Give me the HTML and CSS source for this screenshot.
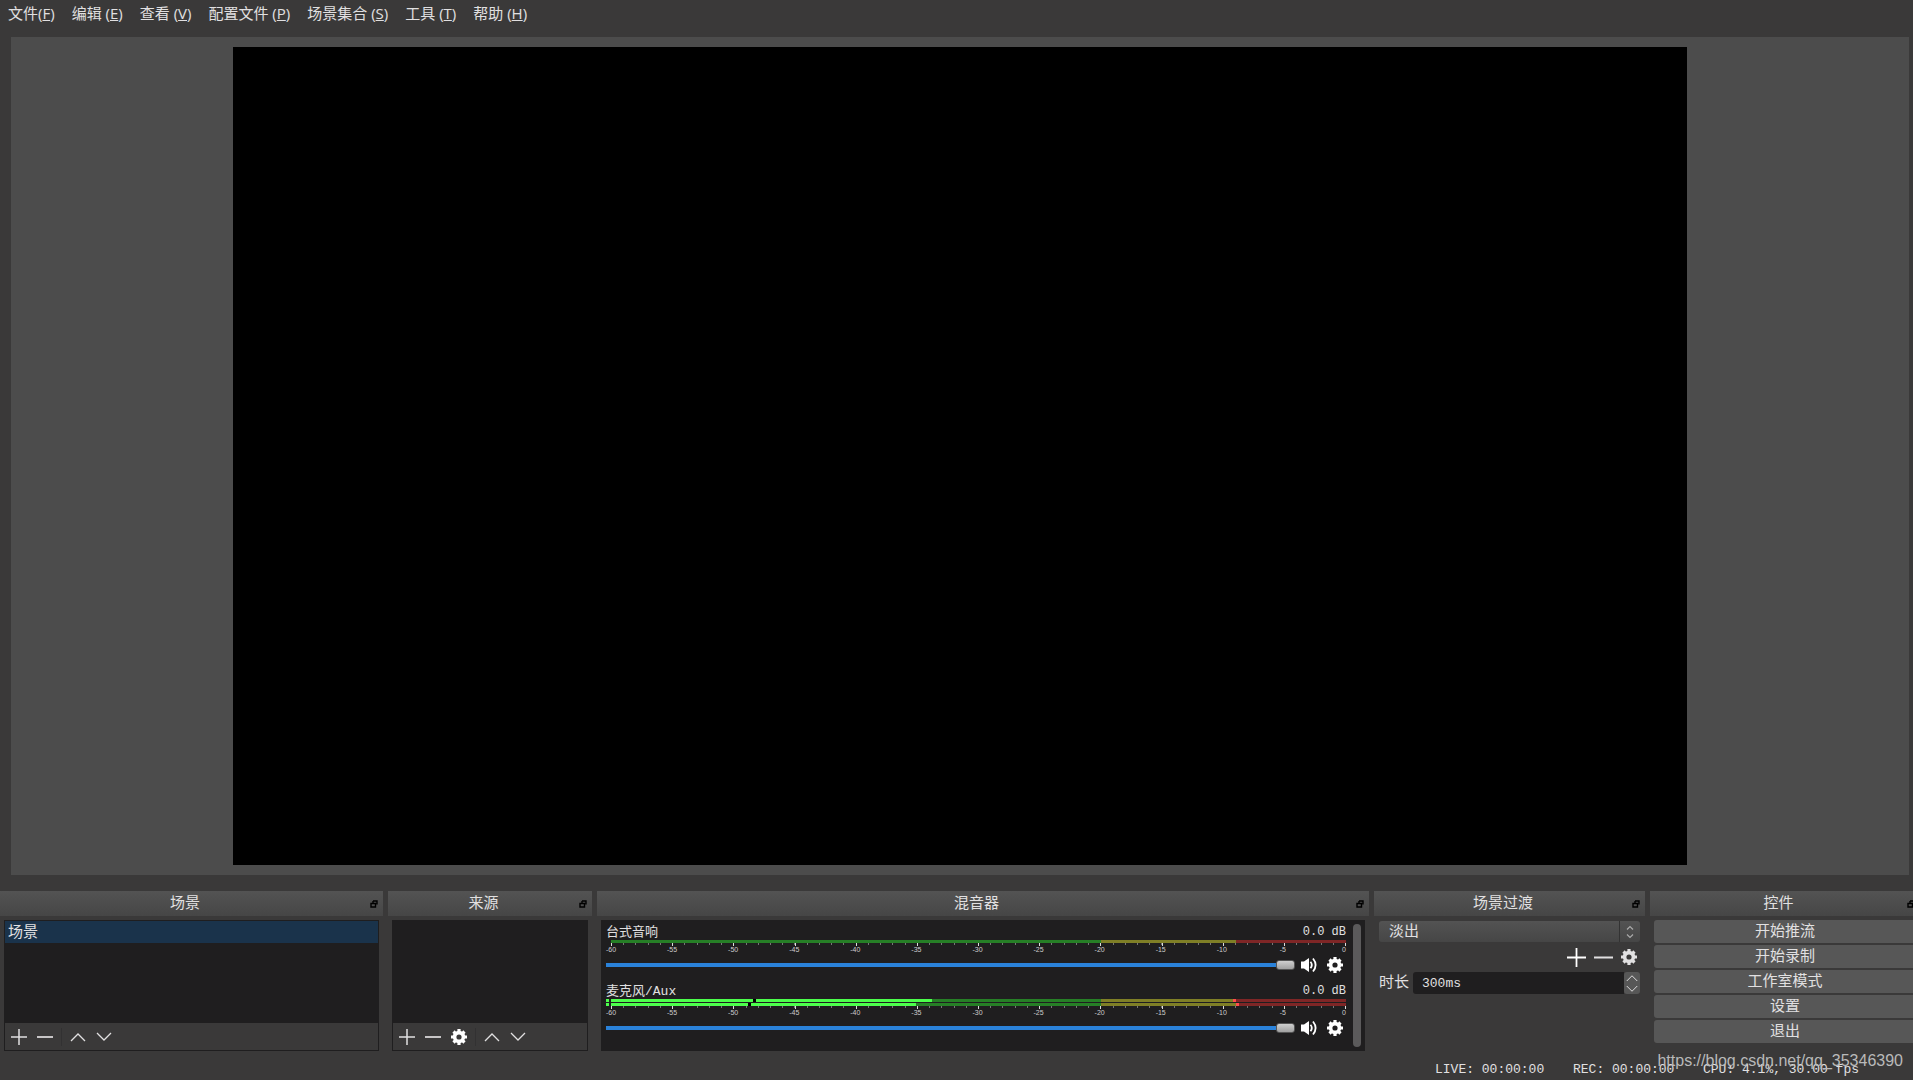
FILE: index.html
```html
<!DOCTYPE html>
<html lang="zh-CN">
<head>
<meta charset="utf-8">
<title>OBS</title>
<link rel="stylesheet" href="styles.css">
</head>
<body>
<svg class="symbols" aria-hidden="true">
  <symbol id="plus" viewBox="0 0 16 16"><path d="M8 0v16M0 8h16" stroke="currentColor" stroke-width="1.5"/></symbol>
  <symbol id="minus" viewBox="0 0 16 16"><path d="M0 8h16" stroke="currentColor" stroke-width="1.7"/></symbol>
  <symbol id="up" viewBox="0 0 16 16"><path d="M1 12l7-7 7 7" fill="none" stroke="currentColor" stroke-width="1.3"/></symbol>
  <symbol id="down" viewBox="0 0 16 16"><path d="M1 4l7 7 7-7" fill="none" stroke="currentColor" stroke-width="1.3"/></symbol>
  <symbol id="up-small" viewBox="0 0 8 8"><path d="M1 5.500l3-3 3 3" fill="none" stroke="currentColor" stroke-width="1.2"/></symbol>
  <symbol id="down-small" viewBox="0 0 8 8"><path d="M1 2.500l3 3 3-3" fill="none" stroke="currentColor" stroke-width="1.2"/></symbol>
  <symbol id="gear" viewBox="0 0 16 16">
    <circle cx="8" cy="8" r="4.4" fill="none" stroke="currentColor" stroke-width="3.6"/>
    <path d="M8 0v3.500M8 12.500V16M0 8h3.500M12.500 8H16M2.500 2.500l2.300 2.300M11.200 11.200l2.300 2.300M13.500 2.500l-2.300 2.300M4.800 11.200l-2.300 2.300" stroke="currentColor" stroke-width="3.2"/>
  </symbol>
  <symbol id="speaker" viewBox="0 0 16 16">
    <path d="M0 4.500h3l5-3.500v14l-5-3.500H0z" fill="currentColor"/>
    <path d="M9.500 4.800q2.600 3.200 0 6.400M12 1.500q5.200 6.500 0 13" fill="none" stroke="currentColor" stroke-width="1.8"/>
  </symbol>
  <symbol id="float" viewBox="0 0 8 8">
    <path d="M3 1h4v3.500M3 1v2M1 3.500h4.500v3.500H1z" fill="none" stroke="currentColor" stroke-width="1.4"/>
  </symbol>
</svg>

<nav class="menu">
  <a href="#">文件(<u>F</u>)</a>
  <a href="#">编辑 (<u>E</u>)</a>
  <a href="#">查看 (<u>V</u>)</a>
  <a href="#">配置文件 (<u>P</u>)</a>
  <a href="#">场景集合 (<u>S</u>)</a>
  <a href="#">工具 (<u>T</u>)</a>
  <a href="#">帮助 (<u>H</u>)</a>
</nav>

<main class="preview"><div class="canvas"></div></main>

<div class="docks">
  <section class="dock">
    <header class="dock-title"><h2>场景</h2><button aria-label="浮动"><svg><use href="#float"/></svg></button></header>
    <div class="panel">
      <ul class="list"><li class="selected">场景</li></ul>
      <div class="toolbar">
        <button aria-label="添加"><svg><use href="#plus"/></svg></button>
        <button aria-label="移除"><svg><use href="#minus"/></svg></button>
        <span class="separator"></span>
        <button aria-label="上移"><svg><use href="#up"/></svg></button>
        <button aria-label="下移"><svg><use href="#down"/></svg></button>
      </div>
    </div>
  </section>

  <section class="dock">
    <header class="dock-title"><h2>来源</h2><button aria-label="浮动"><svg><use href="#float"/></svg></button></header>
    <div class="panel">
      <ul class="list"></ul>
      <div class="toolbar">
        <button aria-label="添加"><svg><use href="#plus"/></svg></button>
        <button aria-label="移除"><svg><use href="#minus"/></svg></button>
        <button class="bright" aria-label="属性"><svg><use href="#gear"/></svg></button>
        <span class="separator"></span>
        <button aria-label="上移"><svg><use href="#up"/></svg></button>
        <button aria-label="下移"><svg><use href="#down"/></svg></button>
      </div>
    </div>
  </section>

  <section class="dock">
    <header class="dock-title"><h2>混音器</h2><button aria-label="浮动"><svg><use href="#float"/></svg></button></header>
    <div class="panel mixer">
      <div class="channels">
        <div class="channel">
          <div class="channel-head"><label for="desktop">台式音响</label><output for="desktop">0.0 dB</output></div>
          <div class="meter"><div class="bar"></div></div>
          <div class="ticks"></div>
          <div class="scale"><span>-60</span><span>-55</span><span>-50</span><span>-45</span><span>-40</span><span>-35</span><span>-30</span><span>-25</span><span>-20</span><span>-15</span><span>-10</span><span>-5</span><span>0</span></div>
          <div class="channel-controls">
            <input type="range" id="desktop" min="0" max="100" value="100">
            <button aria-label="静音"><svg><use href="#speaker"/></svg></button>
            <button aria-label="设置"><svg><use href="#gear"/></svg></button>
          </div>
        </div>
        <div class="channel">
          <div class="channel-head"><label for="mic">麦克风/Aux</label><output for="mic">0.0 dB</output></div>
          <div class="meter">
            <div class="bar live"><i class="level" style="width:43.7%"></i><i class="mark hold" style="left:19.3%"></i><i class="mark peak" style="left:84.6%"></i></div>
            <div class="bar live"><i class="level" style="width:41.5%"></i><i class="mark hold" style="left:18.6%"></i><i class="mark peak" style="left:85%"></i></div>
          </div>
          <div class="ticks"></div>
          <div class="scale"><span>-60</span><span>-55</span><span>-50</span><span>-45</span><span>-40</span><span>-35</span><span>-30</span><span>-25</span><span>-20</span><span>-15</span><span>-10</span><span>-5</span><span>0</span></div>
          <div class="channel-controls">
            <input type="range" id="mic" min="0" max="100" value="100">
            <button aria-label="静音"><svg><use href="#speaker"/></svg></button>
            <button aria-label="设置"><svg><use href="#gear"/></svg></button>
          </div>
        </div>
      </div>
      <div class="scrollbar"></div>
    </div>
  </section>

  <section class="dock">
    <header class="dock-title"><h2>场景过渡</h2><button aria-label="浮动"><svg><use href="#float"/></svg></button></header>
    <div class="transitions">
      <div class="combo">
        <select aria-label="场景过渡"><option>淡出</option></select>
        <span class="combo-arrows"><svg><use href="#up-small"/></svg><svg><use href="#down-small"/></svg></span>
      </div>
      <div class="transition-tools">
        <button class="bright" aria-label="添加"><svg class="large"><use href="#plus"/></svg></button>
        <button aria-label="移除"><svg class="large"><use href="#minus"/></svg></button>
        <button aria-label="属性"><svg><use href="#gear"/></svg></button>
      </div>
      <div class="duration">
        <label for="duration">时长</label>
        <input type="text" id="duration" value="300ms">
        <span class="spin">
          <button aria-label="增加"><svg><use href="#up"/></svg></button>
          <button aria-label="减少"><svg><use href="#down"/></svg></button>
        </span>
      </div>
    </div>
  </section>

  <section class="dock">
    <header class="dock-title"><h2>控件</h2><button aria-label="浮动"><svg><use href="#float"/></svg></button></header>
    <div class="controls">
      <button>开始推流</button>
      <button>开始录制</button>
      <button>工作室模式</button>
      <button>设置</button>
      <button>退出</button>
    </div>
  </section>
</div>

<footer class="status">
  <span class="live-time">LIVE: 00:00:00</span>
  <span class="rec-time">REC: 00:00:00</span>
  <span class="cpu">CPU: 4.1%, 30.00 fps</span>
  <span class="watermark">https://blog.csdn.net/qq_35346390</span>
</footer>
</body>
</html>
```
FILE: styles.css
```css
* { box-sizing: border-box; }

body {
  margin: 0;
  height: 100vh;
  display: flex;
  flex-direction: column;
  overflow: hidden;
  background: #3a3939;
  color: #e1e0e1;
  font: 15px/20px "Liberation Mono", "Noto Sans CJK SC", monospace;
}

.symbols { display: none; }

button {
  display: flex;
  align-items: center;
  justify-content: center;
  margin: 0;
  padding: 0;
  border: 0;
  background: none;
  color: inherit;
  font: inherit;
}
.bright { color: #fff; }

svg { display: block; width: 16px; height: 16px; }

.menu {
  display: flex;
  gap: 17px;
  height: 28px;
  padding: 0 8px;
  font: 15px/26px "Open Sans", "Noto Sans CJK SC", sans-serif;
}
.menu a { color: inherit; text-decoration: none; white-space: pre; }

.preview {
  flex: 1;
  min-height: 0;
  display: flex;
  justify-content: center;
  margin: 9px 4px 16px 11px;
  padding: 10px;
  background: #4c4c4c;
}
.canvas { flex: none; height: 100%; aspect-ratio: 16 / 9; background: #000; }

.docks {
  display: grid;
  grid-template-columns: 383fr 204fr 772fr 271fr 270fr;
  gap: 5px;
  margin-right: -7px;
}
.dock { display: flex; flex-direction: column; min-width: 0; }

.dock-title {
  display: flex;
  align-items: center;
  height: 25px;
  padding-right: 5px;
  background: linear-gradient(#535353, #464646);
}
.dock-title h2 {
  flex: 1;
  margin: 0;
  padding-top: 2px;
  font-size: 15px;
  font-weight: normal;
  text-align: center;
}
.dock-title button { color: #000; }
.dock-title svg { width: 8px; height: 8px; }

.panel {
  display: flex;
  flex-direction: column;
  height: 131px;
  margin: 4px 4px 0;
  border: 1px solid #1f1e1f;
  background: #1f1e1f;
}
.list { flex: 1; margin: 0; padding: 0; list-style: none; }
.selected { height: 22px; padding: 2px 0 0 3px; background: #1a334b; line-height: 22px; }

.toolbar {
  display: flex;
  align-items: center;
  height: 27px;
  padding-left: 1px;
  background: #3a3939;
}
.toolbar button { width: 26px; height: 26px; }
.separator { width: 1px; height: 18px; margin: 0 3px; background: #323132; }

.mixer { flex-direction: row; gap: 7px; padding: 0 3px 0 4px; }
.channels { flex: 1; display: flex; flex-direction: column; gap: 2px; }
.channel-head {
  display: flex;
  justify-content: space-between;
  height: 19px;
  padding-top: 2px;
  font-size: 13px;
  line-height: 19px;
}
.channel + .channel .channel-head { height: 20px; padding-top: 3px; }
.channel-head output { font-size: 12px; }

.meter { display: grid; gap: 1px; padding-left: 5px; }
.bar {
  position: relative;
  height: 3px;
  background: linear-gradient(to right, #267f26 66.67%, #7f7f26 66.67% 85%, #7f2626 85%);
}
.live::before {
  content: "";
  position: absolute;
  left: -5px;
  width: 3px;
  height: 3px;
  background: #4cff4c;
}
.level { display: block; height: 3px; background: #4cff4c; }
.mark { position: absolute; top: 0; width: 3px; height: 3px; }
.hold { background: #000; }
.peak { background: #ff4c4c; }

.ticks {
  height: 3px;
  margin-left: 5px;
  border-right: 1px solid #ddd;
  background:
    repeating-linear-gradient(to right, #ddd 0 1px, transparent 1px calc(100% / 12)),
    repeating-linear-gradient(to right, #777 0 1px, transparent 1px calc(100% / 60)) 0 0 / 100% 2px no-repeat;
}
.scale {
  display: flex;
  justify-content: space-between;
  height: 7px;
  margin: 0 2px 0 5px;
  color: #ccc;
  font: 7px/7px "Liberation Sans", sans-serif;
}
.scale span { display: flex; justify-content: center; width: 0; }

.channel-controls { display: flex; align-items: center; height: 24px; padding-right: 3px; color: #fff; }
.channel-controls input {
  flex: 1;
  min-width: 0;
  height: 10px;
  margin: 0 6px 0 0;
  appearance: none;
  background: linear-gradient(#2a82da, #2a82da) 0 3px / 100% 4px no-repeat;
}
.channel-controls input::-webkit-slider-thumb {
  appearance: none;
  width: 19px;
  height: 10px;
  border: 1px solid #555;
  border-radius: 3px;
  background: linear-gradient(#cfcfcf, #a0a0a0);
}
.channel-controls button + button { margin-left: 10px; }

.scrollbar { width: 8px; margin: 3px 0; border-radius: 4px; background: #5b5a5b; }

.transitions { padding: 5px 5px 0; }
.combo { position: relative; display: flex; height: 21px; }
.combo select {
  flex: 1;
  padding: 2px 10px 0;
  border: 0;
  border-radius: 3px;
  appearance: none;
  background: linear-gradient(#535353, #464646);
  color: inherit;
  font: inherit;
}
.combo-arrows {
  position: absolute;
  right: 0;
  display: flex;
  flex-direction: column;
  align-items: center;
  justify-content: center;
  width: 21px;
  height: 21px;
  border-left: 1px solid #333;
  color: #aaa;
}
.combo-arrows svg { width: 8px; height: 8px; }

.transition-tools {
  display: flex;
  align-items: center;
  justify-content: flex-end;
  gap: 8px;
  height: 30px;
  padding-right: 3px;
}
.transition-tools .large { width: 19px; height: 19px; }

.duration { display: flex; align-items: center; height: 22px; }
.duration label { padding-top: 2px; }
.duration input {
  flex: 1;
  min-width: 0;
  height: 22px;
  margin-left: 4px;
  padding: 0 9px;
  border: 0;
  border-radius: 3px 0 0 3px;
  background: #1f1e1f;
  color: inherit;
  font-size: 13px;
  font-family: inherit;
}
.spin { width: 16px; border-radius: 3px; background: #575757; }
.spin button { width: 16px; height: 11px; }
.spin svg { width: 12px; height: 12px; }

.controls { display: grid; gap: 2px; padding: 4px 4px 0; }
.controls button { height: 23px; padding-top: 2px; border-radius: 3px; background: #575757; }

.status {
  position: relative;
  display: flex;
  justify-content: flex-end;
  height: 29px;
  padding: 9px 0 0;
  font-size: 13px;
}
.live-time { width: 138px; }
.rec-time { width: 130px; }
.cpu { width: 210px; }
.watermark {
  position: absolute;
  right: 10px;
  top: 0;
  color: #b9b9b9;
  font: 16px/20px "Liberation Sans", sans-serif;
}
```
